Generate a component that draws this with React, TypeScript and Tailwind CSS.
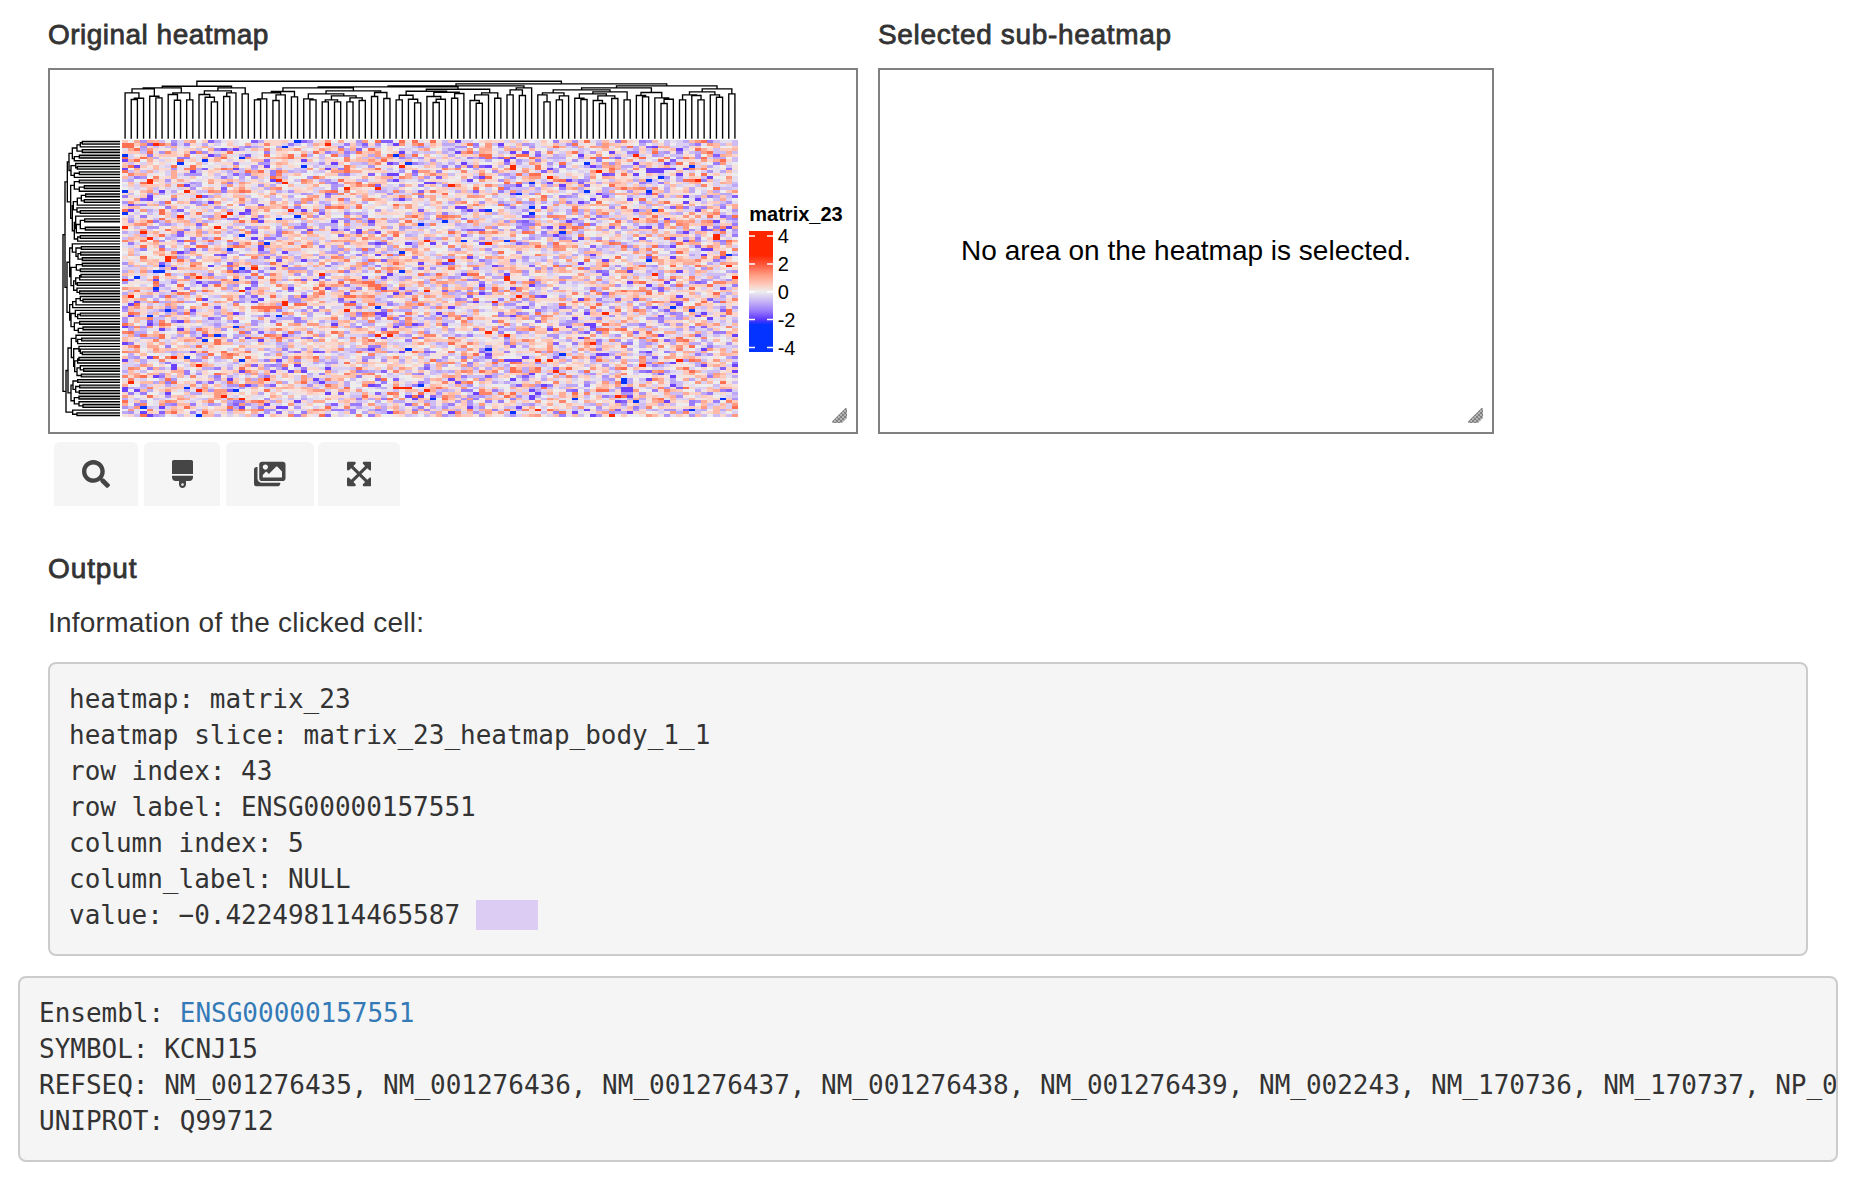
import { FaBrush, FaExpandArrowsAlt, FaImages, FaSearch } from "react-icons/fa";

type Tree = number | [number, Tree, Tree];

const COLS = 100;
const ROWS = 100;
const MAP_W = 616;
const MAP_H = 277;
const CELL_W = MAP_W / COLS;
const CELL_H = MAP_H / ROWS;

/* Column clustering: [merge height, left, right]; numbers are leaves. */
const columnTree: Tree = [
  32,
  [
    47,
    [52, [55, [67, 0, [83, [87, 1, 2], 3]], [77, 4, [82, 5, 6]]], [67, [72, 7, [89, 8, 9]], [88, 10, 11]]],
    [52, [61, [72, 12, [80, 13, [94, 14, 15]]], [67, [78, 16, 17], 18]], [70, 19, 20]],
  ],
  [
    40,
    [
      46,
      [
        49,
        [
          52,
          [63, [67, [85, [88, 21, 22], 23], [73, [90, 24, 25], 26]], [79, 27, 28]],
          [
            61,
            [70, [85, 29, [88, 30, 31]], [76, [88, [94, 32, 33], [94, 34, 35]], [82, [94, 36, 37], [90, 38, 39]]]],
            [66, [78, 40, 41], [84, 42, 43]],
          ],
        ],
        [
          56,
          [
            62,
            [74, [88, 44, 45], [86, 46, [97, 47, 48]]],
            [65, [78, 49, [86, [96, 50, 51], 52]], [69, [83, 53, 54], 55]],
          ],
          [67, [73, [90, 56, [98, 57, 58]], 59], [83, 60, 61]],
        ],
      ],
      [52, [58, [73, 62, 63], [75, 64, 65]], 66],
    ],
    [
      46,
      [
        52,
        [
          58,
          [67, [73, 67, [94, 68, 69]], [76, [88, 70, 71], 72]],
          [64, [70, [83, 73, [87, 74, 75]], [76, [90, 76, [99, 77, 78]], [84, 79, 80]]], [88, 81, 82]],
        ],
        [66, [75, 83, [79, 84, 85]], [82, 86, [86, [99, 87, 88], 89]]],
      ],
      [55, [64, [73, [88, 90, 91], [75, 92, [88, 93, 94]]], [73, 95, [80, 96, 97]]], [70, 98, 99]],
    ],
  ],
];

const rowTree: Tree = [
  188,
  [
    194,
    [
      201,
      [
        206,
        [216, [230, [240, [246, 0, 1], 2], [246, 3, 4]], [222, [237, 5, 6], 7]],
        [212, [226, 8, [231, 9, 10]], [222, [237, 11, 12], 13]],
      ],
      [
        211,
        [222, [237, 14, 15], [237, [252, 16, 17], 18]],
        [
          216,
          [219, [231, [243, [256, 19, 20], [252, 21, 22]], 23], [230, 24, [240, 25, 26]]],
          [222, [226, 27, [228, [240, [253, 28, 29], [255, 31, 32]], 33]], [232, [240, 34, 35], 36]],
        ],
      ],
    ],
    [
      200,
      [
        208,
        [216, 37, [227, [243, 38, 39], [233, [241, 40, 41], [246, 42, 43]]]],
        [212, [228, [246, 44, 45], [240, 46, 47]], [220, [226, [238, [242, 48, 49], 50], [231, 51, 52]], [230, 53, [238, 54, 55]]]],
      ],
      [
        208,
        [217, [227, [240, 56, [248, 57, 58]], 59], 60],
        [212, [225, 61, [232, [240, 62, 63], 64]], [222, [238, 65, 66], [234, [248, 67, 68], 69]]],
      ],
    ],
  ],
  [
    197,
    [
      203,
      [
        213,
        [227, 70, [232, [244, 71, 72], 73]],
        [220, [236, 74, [240, 75, [246, 76, 77]]], [223, [232, [236, 78, 79], 80], [230, [240, 81, [250, 82, 83]], [243, 84, 85]]]],
      ],
      [
        212,
        [218, [232, 86, 87], [226, [238, 88, 89], [237, 90, 91]]],
        [222, [236, 92, 93], [236, 94, [248, 95, 96]]],
      ],
    ],
    [217, 97, [230, 98, 99]],
  ],
];

/* Walks a tree and returns the path of its right-angled branches. */
function branches(tree: Tree, vertical: boolean): string {
  const parts: string[] = [];
  const level = (h: number) => (vertical ? (h - 188) / 3 : (h - 32) / 3);
  const leafEnd = vertical ? 57 : 57.5;
  const walk = (t: Tree): [number, number] => {
    if (typeof t === "number") return [(t + 0.5) * (vertical ? CELL_H : CELL_W), leafEnd];
    const [a, ah] = walk(t[1]);
    const [b, bh] = walk(t[2]);
    const h = level(t[0]);
    parts.push(vertical ? `M${ah} ${a}H${h}V${b}H${bh}` : `M${a} ${ah}V${h}H${b}V${bh}`);
    return [(a + b) / 2, h];
  };
  walk(tree);
  return parts.join("");
}

/* Shading between row leaves that merge directly with each other. */
function pairShades(tree: Tree): string {
  if (typeof tree === "number") return "";
  const [h, a, b] = tree;
  if (typeof a === "number" && typeof b === "number") {
    return `M${(h - 188) / 3} ${(a + 0.5) * CELL_H}H57V${(b + 0.5) * CELL_H}H${(h - 188) / 3}Z`;
  }
  return pairShades(a) + pairShades(b);
}

/* Strong cells, [x, y] in thirds of a pixel. */
const strongBlue = [
  [376, 466], [728, 475], [618, 484], [543, 492], [912, 499], [858, 442], [894, 424], [1189, 466], [1227, 491],
  [376, 574], [376, 640], [838, 658], [894, 649], [1263, 673], [1209, 757], [801, 733], [690, 748], [728, 706],
  [487, 799], [478, 814], [467, 814], [413, 832], [728, 806], [708, 841], [1209, 814], [467, 865], [1762, 491],
  [2075, 499], [1596, 550], [1947, 541], [1982, 532], [1560, 583], [1947, 574], [1762, 574], [1596, 626],
  [1596, 638], [1965, 633], [1467, 633], [1689, 700], [1520, 724], [1392, 724], [1947, 781], [2187, 767],
  [1337, 666], [450, 948], [507, 931], [618, 1025], [653, 1006], [838, 948], [1133, 922], [708, 983], [560, 1073],
  [728, 1078], [560, 1164], [708, 1171], [432, 1222], [598, 1246], [1227, 1049], [1263, 1155], [1300, 1196],
  [1467, 1049], [1689, 1064], [1872, 1138], [1872, 1146], [1910, 1203], [2075, 1231], [2168, 1197], [2022, 922],
  [2075, 932], [1723, 1197], [1540, 1239],
];
const strongRed = [
  [467, 433], [450, 543], [450, 550],
  [838, 541], [858, 550], [560, 574], [598, 592], [690, 640], [671, 649], [653, 682], [376, 682], [432, 700],
  [450, 714], [507, 773], [507, 781], [598, 832], [765, 808], [876, 631], [1209, 499], [1356, 559], [1281, 724],
  [1356, 781], [987, 433], [543, 649], [376, 841], [969, 823], [1041, 567], [1133, 567], [728, 873], [1281, 873],
  [1911, 466], [1540, 497], [1540, 505], [1652, 532], [2094, 541], [1800, 517], [2150, 708],
  [2150, 716], [1467, 733], [1520, 830], [1520, 838], [1965, 823], [2187, 799], [2205, 832],
  [1560, 889], [1911, 658], [396, 890], [396, 1148], [598, 1096], [598, 1171], [801, 1138], [1041, 931],
  [1133, 1006], [1170, 1006], [525, 1073], [671, 1190], [728, 1195], [858, 907], [858, 915], [1189, 1164],
  [1207, 1164], [1225, 1164], [1281, 1171], [1485, 908], [1818, 940], [1467, 997], [1520, 1006], [1652, 1082],
  [2040, 1082], [1929, 1096], [1614, 1231], [1836, 1246], [1670, 1114], [1613, 1083], [1854, 1190], [1782, 1030],
];
const warm = [
  [376, 433], [394, 433], [376, 441], [394, 441], [485, 433], [413, 450], [376, 517], [394, 499], [432, 550],
  [487, 633], [487, 640], [525, 773], [543, 781], [578, 799], [1041, 499], [1041, 510], [1041, 517], [1720, 433],
  [1467, 466], [1467, 475], [1596, 475], [1560, 466], [1579, 466], [1614, 508], [2075, 541], [2057, 541],
  [765, 921], [783, 921], [801, 921], [820, 921], [838, 921], [485, 1006], [485, 1014], [1356, 1014], [1356, 1030],
];
const cool = [
  [376, 484], [1189, 524], [1171, 524], [1281, 550], [1300, 550], [1078, 690], [1078, 698], [1947, 508], [1965, 508],
  [1982, 508], [2000, 508], [1947, 517], [1965, 517], [1982, 517], [1392, 625], [1374, 625], [2112, 748], [2130, 748],
  [2112, 685], [2112, 693], [2205, 1096], [2205, 1114], [1872, 1163], [1890, 1163], [1890, 1171], [1890, 1190],
  [1532, 1080], [1514, 1080], [1550, 1080], [1780, 970], [1762, 970], [1133, 940], [1153, 940], [1153, 948],
  [376, 1163], [376, 1171], [487, 1222], [838, 1222], [858, 1222],
];

const ramp = [
  "#0432ff", "#4a2dff", "#6d42ff", "#8560fe", "#9a7bfb", "#ad93f8", "#bca8f6", "#cdbdf4", "#dacef3", "#e4deef",
  "#eeeded",
  "#f3e2de", "#fad6cc", "#fec9bb", "#ffbaa8", "#ffab95", "#ff9a80", "#ff856a", "#ff6f52", "#ff5237", "#ff2600",
];

function heatCells(): string[] {
  let seed = 20230;
  const rand = () => {
    seed = (seed + 0x6d2b79f5) | 0;
    let t = Math.imul(seed ^ (seed >>> 15), 1 | seed);
    t = (t + Math.imul(t ^ (t >>> 7), 61 | t)) ^ t;
    return ((t ^ (t >>> 14)) >>> 0) / 4294967296;
  };
  const grid: number[][] = [];
  for (let r = 0; r < ROWS; r++) {
    const row: number[] = [];
    for (let c = 0; c < COLS; c++) {
      const g = Math.sqrt(-2 * Math.log(rand() + 1e-9)) * Math.cos(2 * Math.PI * rand());
      row.push(Math.max(2, Math.min(18, Math.round(10.3 + g * 4))));
    }
    grid.push(row);
  }
  const mark = (list: number[][], v: number) =>
    list.forEach(([x, y]) => {
      const c = Math.floor((x / 3 - 122) / CELL_W);
      const r = Math.floor((y / 3 - 140) / CELL_H);
      if (grid[r] && c >= 0 && c < COLS) grid[r][c] = v;
    });
  mark(warm, 18);
  mark(cool, 2);
  mark(strongBlue, 0);
  mark(strongRed, 20);
  const paths: string[] = ramp.map(() => "");
  grid.forEach((row, r) => {
    const y0 = Math.round(r * CELL_H);
    const y1 = Math.round((r + 1) * CELL_H);
    row.forEach((v, c) => {
      const x0 = Math.round(c * CELL_W);
      const x1 = Math.round((c + 1) * CELL_W);
      paths[v] += `M${x0} ${y0}H${x1}V${y1}H${x0}Z`;
    });
  });
  return paths;
}

const cellPaths = heatCells();
const columnPath = branches(columnTree, false);
const rowPath = branches(rowTree, true);
const rowShade = pairShades(rowTree);

function Grip({ id }: { id: string }) {
  return (
    <svg className="absolute right-[9px] bottom-[9.5px] h-[15px] w-[15px]" viewBox="0 0 15 15">
      <defs>
        <pattern id={id} width="4" height="4" patternUnits="userSpaceOnUse">
          <rect width="4" height="4" fill="#b4b4b4" />
          <rect width="2" height="2" fill="#808080" />
          <rect x="2" y="2" width="2" height="2" fill="#808080" />
        </pattern>
      </defs>
      <path d="M0 13.5L13.5 0H15V10L10 15H0Z" fill={`url(#${id})`} />
    </svg>
  );
}

function Heatmap() {
  return (
    <svg className="block h-[362px] w-[806px]" viewBox="50 70 806 362">
      <path transform="translate(122 81.2)" d={columnPath} fill="none" stroke="#000" strokeWidth="1.35" />
      <g transform="translate(63 140)">
        <path d={rowShade} fill="#b0b4b0" />
        <path d={rowPath} fill="none" stroke="#000" strokeWidth="1.35" />
      </g>
      <g transform="translate(122 140)" shapeRendering="crispEdges">
        {cellPaths.map((d, i) => (
          <path key={ramp[i]} d={d} fill={ramp[i]} />
        ))}
      </g>
      <defs>
        <linearGradient id="scale" x1="0" y1="0" x2="0" y2="1">
          <stop offset="0.2" stopColor="#ff2600" />
          <stop offset="0.27" stopColor="#ff5237" />
          <stop offset="0.36" stopColor="#ff9a80" />
          <stop offset="0.44" stopColor="#fec9bb" />
          <stop offset="0.5" stopColor="#eeeded" />
          <stop offset="0.57" stopColor="#cdbdf4" />
          <stop offset="0.66" stopColor="#9a7bfb" />
          <stop offset="0.73" stopColor="#5d38ff" />
          <stop offset="0.775" stopColor="#0432ff" />
        </linearGradient>
      </defs>
      <rect x="749" y="231" width="24" height="121" fill="url(#scale)" />
      <path d="M749 236h6M767 236h6M749 264h6M767 264h6M749 291.7h6M767 291.7h6M749 319.5h6M767 319.5h6M749 347.5h6M767 347.5h6" stroke="#fff" strokeWidth="1.4" />
      <g fontFamily="'Liberation Sans', sans-serif" fontSize="20" fill="#000">
        <text x="749.3" y="220.7" fontWeight="700">matrix_23</text>
        <text x="777.7" y="243">4</text>
        <text x="777.7" y="271">2</text>
        <text x="777.7" y="299">0</text>
        <text x="777.7" y="327">-2</text>
        <text x="777.7" y="355">-4</text>
      </g>
    </svg>
  );
}

const heading = "text-[28px] leading-8 text-[#333] [-webkit-text-stroke:0.8px_#333]";
const pre =
  "overflow-hidden rounded-lg border-2 border-[#ccc] bg-[#f5f5f5] px-[19px] pt-[17px] pb-[21px] font-['DejaVu_Sans_Mono',monospace] text-[26px] leading-9 tracking-[-0.012px] text-[#333]";
const tool = "flex h-16 items-center justify-center rounded-t-md bg-[#f5f5f5] pb-px text-[#454545]";

export default function App() {
  return (
    <div className="h-[1192px] w-[1862px] overflow-hidden bg-white px-[18px] pt-[19px] font-['Liberation_Sans',sans-serif]">
      <div className="px-[30px]">
        <div className="flex gap-5">
          <section className="w-[810px]">
            <h5 className={`${heading} tracking-[0.48px]`}>Original heatmap</h5>
            <div className="relative mt-[17px] h-[366px] border-2 border-[#808080]">
              <Heatmap />
              <Grip id="grip-main" />
            </div>
            <div className="mt-2 flex pl-1.5">
              <button className={`${tool} mr-1.5 w-[84px]`} aria-label="Search">
                <FaSearch className="h-7 w-7" />
              </button>
              <button className={`${tool} mr-1.5 w-[76px]`} aria-label="Brush">
                <FaBrush className="h-7 w-[21px]" />
              </button>
              <button className={`${tool} mr-1 w-[88px]`} aria-label="Save image">
                <FaImages className="h-7 w-[31.5px]" />
              </button>
              <button className={`${tool} w-[82px]`} aria-label="Resize">
                <FaExpandArrowsAlt className="h-7 w-[24.5px]" />
              </button>
            </div>
          </section>
          <section className="w-[616px]">
            <h5 className={`${heading} tracking-[0.68px]`}>Selected sub-heatmap</h5>
            <div className="relative mt-[17px] flex h-[366px] items-center justify-center border-2 border-[#808080]">
              <p className="text-[28px] leading-8 text-black">No area on the heatmap is selected.</p>
              <Grip id="grip-sub" />
            </div>
          </section>
        </div>

        <h5 className={`${heading} mt-[47px] tracking-[0.9px]`}>Output</h5>
        <p className="mt-[22px] text-[28px] leading-8 tracking-[0.23px] text-[#333]">Information of the clicked cell:</p>
        <div className={`${pre} mt-[23px] w-[1760px]`}>
          <p>heatmap: matrix_23</p>
          <p>heatmap slice: matrix_23_heatmap_body_1_1</p>
          <p>row index: 43</p>
          <p>row label: ENSG00000157551</p>
          <p>column index: 5</p>
          <p>column_label: NULL</p>
          <p className="flex items-center">
            <span>value: −0.422498114465587</span>
            <span className="ml-[15.6px] h-[30px] w-[62px] bg-[#dccbf2]" />
          </p>
        </div>
      </div>

      <div className={`${pre} mt-5 w-[1820px] whitespace-nowrap`}>
        <p>
          Ensembl: <a className="text-[#337ab7]">ENSG00000157551</a>
        </p>
        <p>SYMBOL: KCNJ15</p>
        <p>
          REFSEQ: NM_001276435, NM_001276436, NM_001276437, NM_001276438, NM_001276439, NM_002243, NM_170736, NM_170737, NP_001
        </p>
        <p>UNIPROT: Q99712</p>
      </div>
    </div>
  );
}
